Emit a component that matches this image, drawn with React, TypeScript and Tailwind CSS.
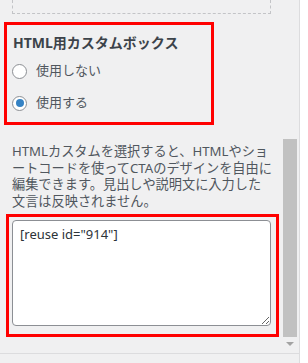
import React from 'react';

const font = { fontFamily: '"Noto Sans", "Noto Sans CJK JP", sans-serif' };

const Radio: React.FC<{ label: string; checked?: boolean }> = ({ label, checked }) => (
  <label className="flex items-center gap-[9px] h-[32px] text-[13px] text-[#50575e]">
    <span className="w-[15px] h-[15px] rounded-full border border-[#8c8f94] bg-white flex items-center justify-center shrink-0">
      {checked && <span className="w-[8px] h-[8px] rounded-full bg-[#3582c4]" />}
    </span>
    {label}
  </label>
);

export default function App() {
  const lines = [
    'HTMLカスタムを選択すると、HTMLやショ',
    'ートコードを使ってCTAのデザインを自由に',
    '編集できます。見出しや説明文に入力した',
    '文言は反映されません。',
  ];

  return (
    <div className="w-[308px] h-[363px] bg-[#f0f0f1] flex overflow-hidden" style={font}>
      {/* Sidebar panel */}
      <div className="w-[299px] relative flex flex-col">
        {/* previous box (cut off at top) */}
        <div className="ml-[12px] w-[259px] h-[14px] border-x border-b border-dashed border-[#c3c4c7]" />

        {/* HTML custom box options */}
        <div className="ml-[4px] mt-[8px] w-[210px] h-[103px] border-[3px] border-[#ff0000] pl-[5px] pt-[7px]">
          <h3 className="ml-[1px] text-[14px] leading-[22px] font-bold text-[#3c434a]">HTML用カスタムボックス</h3>
          <div className="mt-[1px]">
            <Radio label="使用しない" />
            <Radio label="使用する" checked />
          </div>
        </div>

        {/* description */}
        <p className="mt-[18px] px-[12px] text-[13.2px] leading-[16.5px] text-[#50575e] whitespace-nowrap">
          {lines.map((l) => (
            <span key={l} className="block">{l}</span>
          ))}
        </p>

        {/* textarea */}
        <div className="ml-[6px] mt-[5px] w-[273px] h-[123px] border-[3px] border-[#ff0000] pl-[3px] pt-[3px]">
          <textarea
            readOnly
            defaultValue={'[reuse id="914"]'}
            className="block w-[259px] h-[106px] rounded-[4px] border border-[#8c8f94] bg-white px-[7px] py-[3px] text-[13px] leading-[20px] text-[#2c3338] outline-none"
            style={font}
          />
        </div>

        <div className="mt-auto h-[10px] border-t border-[#dcdcde]" />

        {/* scrollbar */}
        <div className="absolute left-[283px] top-[139px] w-[14px] h-[198px] bg-[#c1c1c1]" />
        <div className="absolute left-[286px] top-[342px] w-0 h-0 border-x-[4px] border-x-transparent border-t-[4px] border-t-[#a3a3a3]" />
      </div>

      {/* right edge */}
      <div className="flex-1 bg-white border-l border-[#dcdcde]" />
    </div>
  );
}
